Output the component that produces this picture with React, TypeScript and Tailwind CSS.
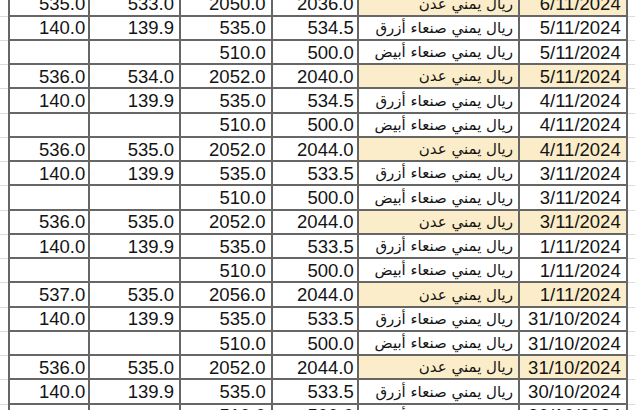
import React from 'react';

type Row = [string, string, string, string, string, string, boolean];

const rows: Row[] = [
  ['535.0', '533.0', '2050.0', '2036.0', 'ريال يمني عدن', '6/11/2024', true],
  ['140.0', '139.9', '535.0', '534.5', 'ريال يمني صنعاء أزرق', '5/11/2024', false],
  ['', '', '510.0', '500.0', 'ريال يمني صنعاء أبيض', '5/11/2024', false],
  ['536.0', '534.0', '2052.0', '2040.0', 'ريال يمني عدن', '5/11/2024', true],
  ['140.0', '139.9', '535.0', '534.5', 'ريال يمني صنعاء أزرق', '4/11/2024', false],
  ['', '', '510.0', '500.0', 'ريال يمني صنعاء أبيض', '4/11/2024', false],
  ['536.0', '535.0', '2052.0', '2044.0', 'ريال يمني عدن', '4/11/2024', true],
  ['140.0', '139.9', '535.0', '533.5', 'ريال يمني صنعاء أزرق', '3/11/2024', false],
  ['', '', '510.0', '500.0', 'ريال يمني صنعاء أبيض', '3/11/2024', false],
  ['536.0', '535.0', '2052.0', '2044.0', 'ريال يمني عدن', '3/11/2024', true],
  ['140.0', '139.9', '535.0', '533.5', 'ريال يمني صنعاء أزرق', '1/11/2024', false],
  ['', '', '510.0', '500.0', 'ريال يمني صنعاء أبيض', '1/11/2024', false],
  ['537.0', '535.0', '2056.0', '2044.0', 'ريال يمني عدن', '1/11/2024', true],
  ['140.0', '139.9', '535.0', '533.5', 'ريال يمني صنعاء أزرق', '31/10/2024', false],
  ['', '', '510.0', '500.0', 'ريال يمني صنعاء أبيض', '31/10/2024', false],
  ['536.0', '535.0', '2052.0', '2044.0', 'ريال يمني عدن', '31/10/2024', true],
  ['140.0', '139.9', '535.0', '533.5', 'ريال يمني صنعاء أزرق', '30/10/2024', false],
  ['', '', '510.0', '500.0', 'ريال يمني صنعاء أبيض', '30/10/2024', false],
];

const numCell =
  'flex items-end justify-end border-l-2 border-[#666] pr-[3px] pb-[1px] leading-none';

export default function App() {
  return (
    <div
      className="h-[410px] w-[635px] overflow-hidden bg-white text-[18.5px] text-[#141414]"
      style={{ fontFamily: '"Liberation Sans", Arial, sans-serif' }}
    >
      <div className="-mt-[7.55px]">
        {rows.map((r, i) => (
          <div key={i} className="flex h-[24.25px]">
            <div className="w-[8px] border-b border-[#dcdcdc]" />
            <div className="flex flex-1 border-b-2 border-r-2 border-[#666]">
              <div className={`${numCell} w-[80.3px]`}>{r[0]}</div>
              <div className={`${numCell} w-[90.7px] pr-[5px]`}>{r[1]}</div>
              <div className={`${numCell} w-[91.7px] pr-[5px]`}>{r[2]}</div>
              <div className={`${numCell} w-[86px]`}>{r[3]}</div>
              <div
                className={`flex w-[161.3px] items-center justify-end overflow-hidden border-l-2 border-[#666] pr-[5px] pt-[1px] ${
                  r[6] ? 'bg-[#fbedc9]' : ''
                }`}
              >
                <span
                  dir="rtl"
                  className="whitespace-nowrap text-[15px] leading-none"
                  style={{ fontFamily: '"DejaVu Sans", sans-serif' }}
                >
                  {r[4]}
                </span>
              </div>
              <div
                className={`flex flex-1 items-end justify-end border-l-2 border-[#666] pr-[5px] pb-[1px] leading-none ${
                  r[6] ? 'bg-[#fbedc9]' : ''
                }`}
              >
                {r[5]}
              </div>
            </div>
            <div className="w-[7.3px] border-b border-[#dcdcdc]" />
          </div>
        ))}
      </div>
    </div>
  );
}
